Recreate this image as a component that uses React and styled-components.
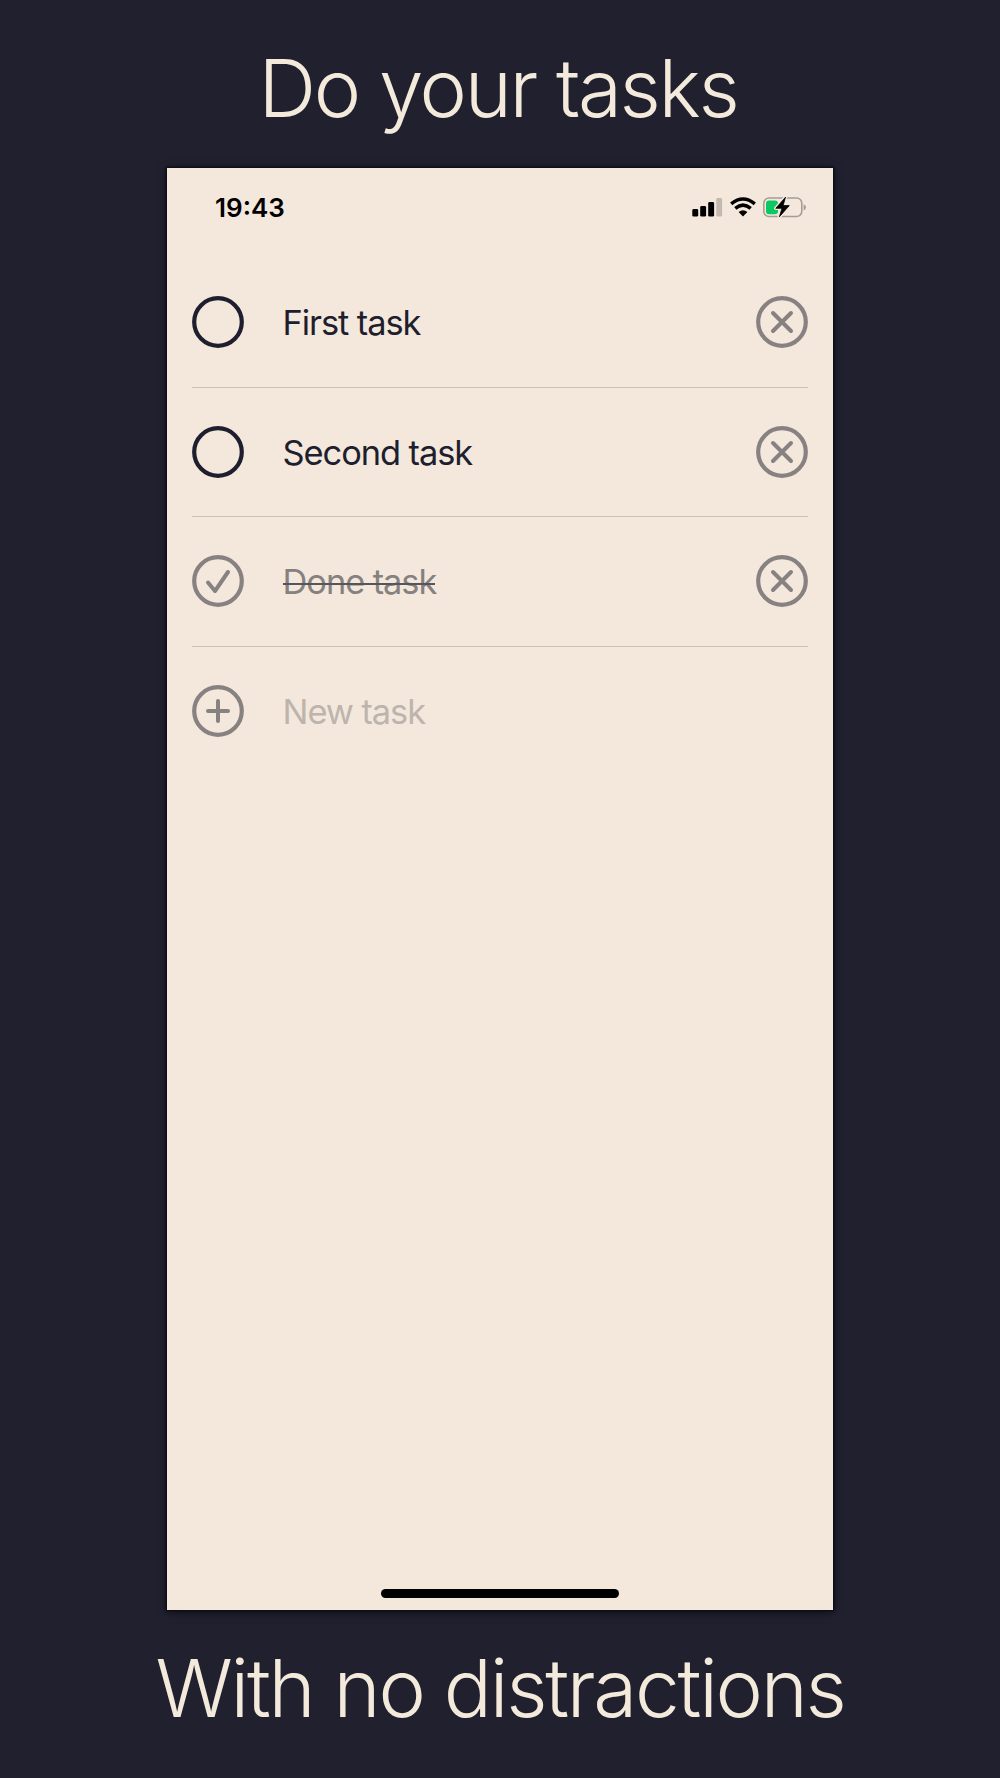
import React, { useState } from 'react';
import styled, { createGlobalStyle } from 'styled-components';

const GlobalStyle = createGlobalStyle`
  * {
    box-sizing: border-box;
  }
  body {
    margin: 0;
    background: #20202f;
    font-family: Inter, 'Liberation Sans', sans-serif;
  }
`;

const Page = styled.main`
  display: grid;
  grid-template-rows: 168px 1442px 168px;
  justify-items: center;
  width: 1000px;
  height: 1778px;
  overflow: hidden;
  background: #20202f;
`;

const Headline = styled.h1`
  margin: 0;
  padding-top: ${props => props.$top}px;
  padding-right: ${props => props.$shift || 0}px;
  color: #f3eadb;
  font-size: 80px;
  font-weight: 300;
  line-height: 96px;
  letter-spacing: ${props => props.$spacing}px;
  white-space: nowrap;
`;

const Screen = styled.section`
  display: flex;
  flex-direction: column;
  width: 666px;
  background: #f4e8dc;
  box-shadow: 0 0 2px 1px #0b0b14, 0 2px 9px rgba(0, 0, 0, 0.5);
`;

const StatusBar = styled.header`
  display: flex;
  justify-content: space-between;
  align-items: center;
  height: 80px;
  padding: 0 26px 0 48px;
`;

const Clock = styled.time`
  color: #000;
  font-size: 26px;
  font-weight: 600;
  line-height: 32px;
`;

const TaskList = styled.ul`
  flex: 1;
  margin: 0;
  padding: 10px 25px 0;
  list-style: none;
`;

const TaskRow = styled.li`
  display: flex;
  align-items: center;
  height: 129.6px;
  border-bottom: 1px solid ${props => (props.$last ? 'transparent' : '#c9c0b8')};
`;

const IconButton = styled.button`
  flex: none;
  width: 52px;
  height: 52px;
  padding: 0;
  border: 0;
  background: none;
  color: ${props => (props.$muted ? '#878281' : '#1e1e2e')};

  svg {
    display: block;
  }
`;

const TaskName = styled.span`
  position: relative;
  margin: 2px auto 0 38.6px;
  color: ${props => props.$color};
  font-size: 34.4px;
  font-weight: 400;
  line-height: 42px;
  letter-spacing: -1.07px;
  white-space: nowrap;
`;

const Strike = styled.span`
  position: absolute;
  top: 22px;
  left: 0;
  width: 152px;
  height: 2px;
  background: #57555c;
`;

const HomeIndicator = styled.div`
  align-self: center;
  width: 238px;
  height: 9px;
  margin-bottom: 12px;
  border-radius: 5px;
  background: #000;
`;

const marks = {
  check: 'M16 27.5L23 36L36 17',
  plus: 'M26 16V36M16 26H36',
  close: 'M17 17L35 35M35 17L17 35',
};

const CircleIcon = ({ mark }) => (
  <svg width="52" height="52" viewBox="0 0 52 52" fill="none" stroke="currentColor">
    <circle cx="26" cy="26" r="23.8" strokeWidth="4.2" />
    {mark && <path d={marks[mark]} strokeWidth="4" strokeLinecap="round" strokeLinejoin="round" />}
  </svg>
);

const StatusIcons = () => (
  <svg width="115" height="22" viewBox="0 0 115 22">
    <rect x="0.3" y="12" width="5.9" height="7.6" rx="1.4" />
    <rect x="8.2" y="9" width="5.9" height="10.6" rx="1.4" />
    <rect x="16.2" y="5" width="5.9" height="14.6" rx="1.4" />
    <rect x="24.3" y="1" width="5.8" height="18.6" rx="1.4" fill="#c2b9b0" />

    <g fill="none" stroke="#000" strokeWidth="3.5">
      <path d="M39.2 6.8Q51 -2.8 62.8 6.8" />
      <path d="M43.3 11.3Q51 4.9 58.7 11.3" />
    </g>
    <path d="M46.6 15.1Q51 11.5 55.4 15.1L51 19.4Z" />

    <rect x="71.8" y="1" width="38" height="18.5" rx="5.2" fill="none" stroke="#a49d96" strokeWidth="1.6" />
    <path d="M111.6 7.2Q114 8 114 10.3T111.6 13.4Z" fill="#a49d96" />
    <rect x="74" y="3.4" width="12" height="13.8" rx="3" fill="#0bc962" />
    <path
      d="M93.5 0.2L83.8 11.3H90L87.4 19.8L97.3 8.6H91.1Z"
      stroke="#f4e8dc"
      strokeWidth="3.5"
      strokeLinejoin="round"
    />
    <path d="M93.5 0.2L83.8 11.3H90L87.4 19.8L97.3 8.6H91.1Z" stroke="#000" strokeWidth="0.8" strokeLinejoin="round" />
  </svg>
);

const initialTasks = [
  { id: 1, name: 'First task', done: false },
  { id: 2, name: 'Second task', done: false },
  { id: 3, name: 'Done task', done: true },
];

const App = () => {
  const [tasks, setTasks] = useState(initialTasks);

  const toggleTask = (id) => {
    setTasks(tasks.map(task => (task.id === id ? { ...task, done: !task.done } : task)));
  };

  const removeTask = (id) => {
    setTasks(tasks.filter(task => task.id !== id));
  };

  return (
    <Page>
      <GlobalStyle />
      <Headline $top={40} $spacing={-2.35} $shift={4}>Do your tasks</Headline>
      <Screen>
        <StatusBar>
          <Clock>19:43</Clock>
          <StatusIcons />
        </StatusBar>
        <TaskList>
          {tasks.map(task => (
            <TaskRow key={task.id}>
              <IconButton $muted={task.done} onClick={() => toggleTask(task.id)}>
                <CircleIcon mark={task.done ? 'check' : null} />
              </IconButton>
              <TaskName $color={task.done ? '#858180' : '#1e1e2e'}>
                {task.name}
                {task.done && <Strike />}
              </TaskName>
              <IconButton $muted onClick={() => removeTask(task.id)}>
                <CircleIcon mark="close" />
              </IconButton>
            </TaskRow>
          ))}
          <TaskRow $last>
            <IconButton $muted>
              <CircleIcon mark="plus" />
            </IconButton>
            <TaskName $color="#bdb5ad">New task</TaskName>
          </TaskRow>
        </TaskList>
        <HomeIndicator />
      </Screen>
      <Headline $top={30} $spacing={-2.25}>With no distractions</Headline>
    </Page>
  );
};

export default App;
